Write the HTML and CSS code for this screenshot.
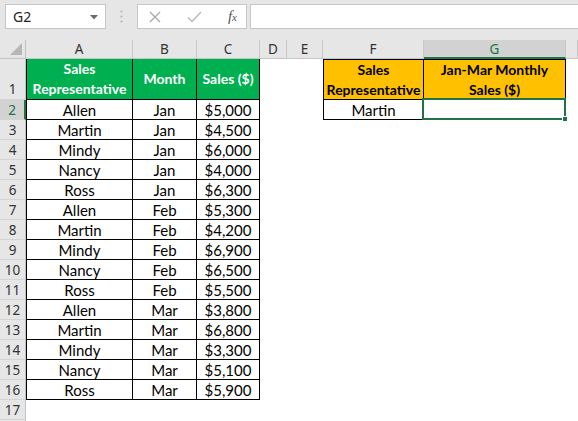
FILE: index.html
```html
<!DOCTYPE html>
<html>
<head>
<meta charset="utf-8">
<link rel="stylesheet" href="styles.css">
</head>
<body>
<div class="toolbar">
  <div class="namebox"><span>G2</span>
    <svg class="dd" width="8" height="5" viewBox="0 0 8 5"><path d="M0 0H8L4 4.5Z" fill="#6b6b6b"/></svg>
  </div>
  <div class="dots">
    <svg width="3" height="13" viewBox="0 0 3 13"><circle cx="1.5" cy="1.5" r="1.1" fill="#b4b4b4"/><circle cx="1.5" cy="6.5" r="1.1" fill="#b4b4b4"/><circle cx="1.5" cy="11.5" r="1.1" fill="#b4b4b4"/></svg>
  </div>
  <div class="fbtns">
    <svg width="12" height="12" viewBox="0 0 12 12"><path d="M1 1L11 11M11 1L1 11" stroke="#a9a9a9" stroke-width="1.3"/></svg>
    <svg width="15" height="12" viewBox="0 0 15 12"><path d="M1 6.5L5 10.5L14 1" stroke="#b9b9b9" stroke-width="1.4" fill="none"/></svg>
    <span class="fx">f<small>x</small></span>
  </div>
  <div class="formula"></div>
</div>
<div class="sheet">
  <div class="corner"><svg width="12" height="12" viewBox="0 0 12 12"><path d="M12 0V12H0Z" fill="#b6b6b6"/></svg></div>
  <div class="ch">A</div><div class="ch">B</div><div class="ch">C</div><div class="ch">D</div><div class="ch">E</div><div class="ch">F</div><div class="ch sel">G</div><div class="ch"></div>

  <div class="rh tall">1</div>
  <div class="c g bl">Sales<br>Representative</div><div class="c g">Month</div><div class="c g">Sales ($)</div>
  <div class="c"></div><div class="c"></div>
  <div class="c y bl bt">Sales<br>Representative</div><div class="c y bt">Jan-Mar Monthly<br>Sales ($)</div><div class="c"></div>

  <div class="rh rsel">2</div>
  <div class="c b bl">Allen</div><div class="c b">Jan</div><div class="c b">$5,000</div><div class="c"></div><div class="c"></div><div class="c b bl">Martin</div><div class="c b active"></div><div class="c"></div>

  <div class="rh">3</div>
  <div class="c b bl">Martin</div><div class="c b">Jan</div><div class="c b">$4,500</div><div class="c"></div><div class="c"></div><div class="c"></div><div class="c"></div><div class="c"></div>
  <div class="rh">4</div>
  <div class="c b bl">Mindy</div><div class="c b">Jan</div><div class="c b">$6,000</div><div class="c"></div><div class="c"></div><div class="c"></div><div class="c"></div><div class="c"></div>
  <div class="rh">5</div>
  <div class="c b bl">Nancy</div><div class="c b">Jan</div><div class="c b">$4,000</div><div class="c"></div><div class="c"></div><div class="c"></div><div class="c"></div><div class="c"></div>
  <div class="rh">6</div>
  <div class="c b bl">Ross</div><div class="c b">Jan</div><div class="c b">$6,300</div><div class="c"></div><div class="c"></div><div class="c"></div><div class="c"></div><div class="c"></div>
  <div class="rh">7</div>
  <div class="c b bl">Allen</div><div class="c b">Feb</div><div class="c b">$5,300</div><div class="c"></div><div class="c"></div><div class="c"></div><div class="c"></div><div class="c"></div>
  <div class="rh">8</div>
  <div class="c b bl">Martin</div><div class="c b">Feb</div><div class="c b">$4,200</div><div class="c"></div><div class="c"></div><div class="c"></div><div class="c"></div><div class="c"></div>
  <div class="rh">9</div>
  <div class="c b bl">Mindy</div><div class="c b">Feb</div><div class="c b">$6,900</div><div class="c"></div><div class="c"></div><div class="c"></div><div class="c"></div><div class="c"></div>
  <div class="rh">10</div>
  <div class="c b bl">Nancy</div><div class="c b">Feb</div><div class="c b">$6,500</div><div class="c"></div><div class="c"></div><div class="c"></div><div class="c"></div><div class="c"></div>
  <div class="rh">11</div>
  <div class="c b bl">Ross</div><div class="c b">Feb</div><div class="c b">$5,500</div><div class="c"></div><div class="c"></div><div class="c"></div><div class="c"></div><div class="c"></div>
  <div class="rh">12</div>
  <div class="c b bl">Allen</div><div class="c b">Mar</div><div class="c b">$3,800</div><div class="c"></div><div class="c"></div><div class="c"></div><div class="c"></div><div class="c"></div>
  <div class="rh">13</div>
  <div class="c b bl">Martin</div><div class="c b">Mar</div><div class="c b">$6,800</div><div class="c"></div><div class="c"></div><div class="c"></div><div class="c"></div><div class="c"></div>
  <div class="rh">14</div>
  <div class="c b bl">Mindy</div><div class="c b">Mar</div><div class="c b">$3,300</div><div class="c"></div><div class="c"></div><div class="c"></div><div class="c"></div><div class="c"></div>
  <div class="rh">15</div>
  <div class="c b bl">Nancy</div><div class="c b">Mar</div><div class="c b">$5,100</div><div class="c"></div><div class="c"></div><div class="c"></div><div class="c"></div><div class="c"></div>
  <div class="rh">16</div>
  <div class="c b bl">Ross</div><div class="c b">Mar</div><div class="c b">$5,900</div><div class="c"></div><div class="c"></div><div class="c"></div><div class="c"></div><div class="c"></div>
  <div class="rh">17</div>
  <div class="c"></div><div class="c"></div><div class="c"></div><div class="c"></div><div class="c"></div><div class="c"></div><div class="c"></div><div class="c"></div>
  <div class="rh"></div>
  <div class="c"></div><div class="c"></div><div class="c"></div><div class="c"></div><div class="c"></div><div class="c"></div><div class="c"></div><div class="c"></div>
</div>
</body>
</html>
```
FILE: styles.css
```css
html, body {
  margin: 0;
  padding: 0;
}
body {
  width: 578px;
  height: 421px;
  overflow: hidden;
  background: #ffffff;
  font-family: "Lato", "Noto Sans", sans-serif;
}
.toolbar {
  height: 40px;
  box-sizing: border-box;
  background: #e6e6e6;
  display: flex;
  align-items: flex-start;
  padding: 4px 0 0 5px;
}
.namebox {
  width: 101px;
  height: 25px;
  box-sizing: border-box;
  background: #fff;
  border: 1px solid #c6c6c6;
  display: flex;
  align-items: center;
  justify-content: space-between;
  padding: 0 7px 0 7px;
  font-family: "Noto Sans", sans-serif;
  font-size: 14px;
  color: #222;
}
.dd {
  margin-top: 1px;
}
.dots {
  width: 31px;
  height: 25px;
  display: flex;
  align-items: center;
  justify-content: center;
}
.fbtns {
  width: 110px;
  height: 25px;
  box-sizing: border-box;
  background: #fff;
  border: 1px solid #c6c6c6;
  display: flex;
  align-items: center;
  justify-content: space-between;
  padding: 0 9px 0 11px;
}
.fx {
  font-family: "Liberation Serif", serif;
  font-style: italic;
  font-size: 15px;
  color: #555;
  line-height: 1;
}
.fx small {
  font-size: 11px;
}
.formula {
  flex: 1;
  height: 25px;
  margin-left: 3px;
  box-sizing: border-box;
  background: #fff;
  border: 1px solid #c6c6c6;
  border-right: none;
}
.sheet {
  display: grid;
  grid-template-columns: 26px 107px 64px 63px 27px 36px 101px 142px 1fr;
  grid-template-rows: 19px 41px repeat(17, 20px);
}
.corner {
  background: #e6e6e6;
  border-right: 1px solid #c2c2c2;
  border-bottom: 1px solid #c2c2c2;
  box-sizing: border-box;
  display: flex;
  align-items: flex-end;
  justify-content: flex-end;
  padding: 0 3px 3px 0;
}
.ch {
  background: #e6e6e6;
  border-right: 1px solid #c6c6c6;
  border-bottom: 1px solid #c6c6c6;
  box-sizing: border-box;
  display: flex;
  align-items: center;
  justify-content: center;
  font-family: "Noto Sans", sans-serif;
  font-size: 13.5px;
  color: #333;
}
.ch.sel {
  background: #d2d2d2;
  color: #217346;
  border-bottom: 2px solid #217346;
}
.rh {
  background: #e6e6e6;
  border-right: 1px solid #c2c2c2;
  border-bottom: 1px solid #d4d4d4;
  box-sizing: border-box;
  display: flex;
  align-items: center;
  justify-content: center;
  font-family: "Noto Sans", sans-serif;
  font-size: 13.5px;
  color: #333;
}
.rh.tall {
  align-items: flex-end;
  padding-bottom: 1px;
}
.rh.rsel {
  background: #d2d2d2;
  color: #217346;
  border-right: 2px solid #217346;
}
.c {
  box-sizing: border-box;
  display: flex;
  align-items: center;
  justify-content: center;
  text-align: center;
  font-size: 15px;
  line-height: 20px;
  color: #000;
}
.b {
  border-right: 1px solid #000;
  border-bottom: 1px solid #000;
}
.bl {
  border-left: 1px solid #000;
}
.bt {
  border-top: 1px solid #000;
}
.g {
  background: #00b050;
  color: #fff;
  font-weight: bold;
  font-size: 14px;
  border-right: 1px solid #000;
  border-bottom: 1px solid #000;
}
.y {
  background: #ffc000;
  color: #000;
  font-weight: bold;
  font-size: 14px;
  border-right: 1px solid #000;
  border-bottom: 1px solid #000;
}
.active {
  position: relative;
}
.active::after {
  content: "";
  position: absolute;
  left: -2px;
  top: -2px;
  right: -1px;
  bottom: -1px;
  border: 2px solid #217346;
}
.active::before {
  content: "";
  position: absolute;
  right: -3px;
  bottom: -3px;
  width: 6px;
  height: 6px;
  background: #217346;
  border: 1px solid #fff;
  box-sizing: border-box;
  z-index: 2;
}
```
